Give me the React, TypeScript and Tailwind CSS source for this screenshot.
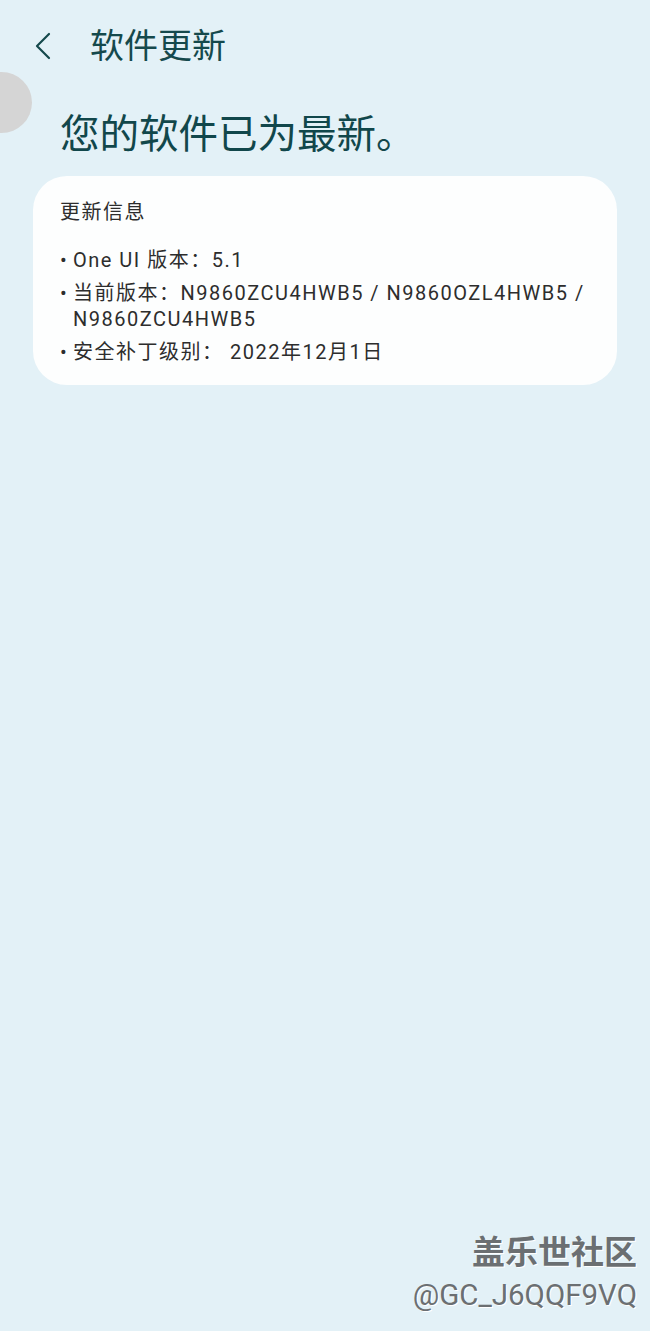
import React from "react";

const cjk = { fontFamily: 'Roboto, "Noto Sans CJK SC", sans-serif' };

export default function App() {
  return (
    <div className="relative w-[650px] h-[1331px] overflow-hidden bg-[#e3f1f7]" style={cjk}>
      {/* header */}
      <div className="flex items-center h-[92px] pl-[33px]">
        <svg width="20" height="30" viewBox="0 0 20 30" className="text-[#15494c]">
          <path d="M16 3 L4 15 L16 27" fill="none" stroke="currentColor" strokeWidth="2.2" strokeLinecap="round" strokeLinejoin="round" />
        </svg>
        <span className="ml-[37px] text-[34px] leading-none text-[#15494c]">软件更新</span>
      </div>

      {/* floating circle */}
      <div className="absolute left-[-29px] top-[72px] w-[61px] h-[61px] rounded-full bg-[#d5d5d5]" />

      <h1 className="pl-[60px] mt-[19px] text-[39.5px] leading-[48px] text-[#11474b] font-normal">
        您的软件已为最新。
      </h1>

      <div className="mx-[33px] mt-[17px] rounded-[34px] bg-[#fdfefe] pl-[27px] pr-[20px] pt-[22px] pb-[20px] text-[#2d2d2d] tracking-[1.5px]">
        <div className="text-[20px] leading-[28px]">更新信息</div>
        <ul className="mt-[21px] flex flex-col gap-[7px] text-[20px] leading-[26px]">
          <li className="flex">
            <span className="w-[13px] shrink-0 tracking-normal">•</span>
            <span>One UI 版本：5.1</span>
          </li>
          <li className="flex">
            <span className="w-[13px] shrink-0 tracking-normal">•</span>
            <span>当前版本：N9860ZCU4HWB5 / N9860OZL4HWB5 / N9860ZCU4HWB5</span>
          </li>
          <li className="flex">
            <span className="w-[13px] shrink-0 tracking-normal">•</span>
            <span>安全补丁级别： 2022年12月1日</span>
          </li>
        </ul>
      </div>

      {/* watermark */}
      <div className="absolute right-[13px] bottom-[18px] flex flex-col items-end text-[#6b6f72]">
        <span className="text-[33px] leading-[40px] font-bold [text-shadow:1px_1px_0_#ffffff]">盖乐世社区</span>
        <span className="text-[29.5px] leading-[36px] mt-[4px] [text-shadow:1px_1px_0_#ffffff]">@GC_J6QQF9VQ</span>
      </div>
    </div>
  );
}
